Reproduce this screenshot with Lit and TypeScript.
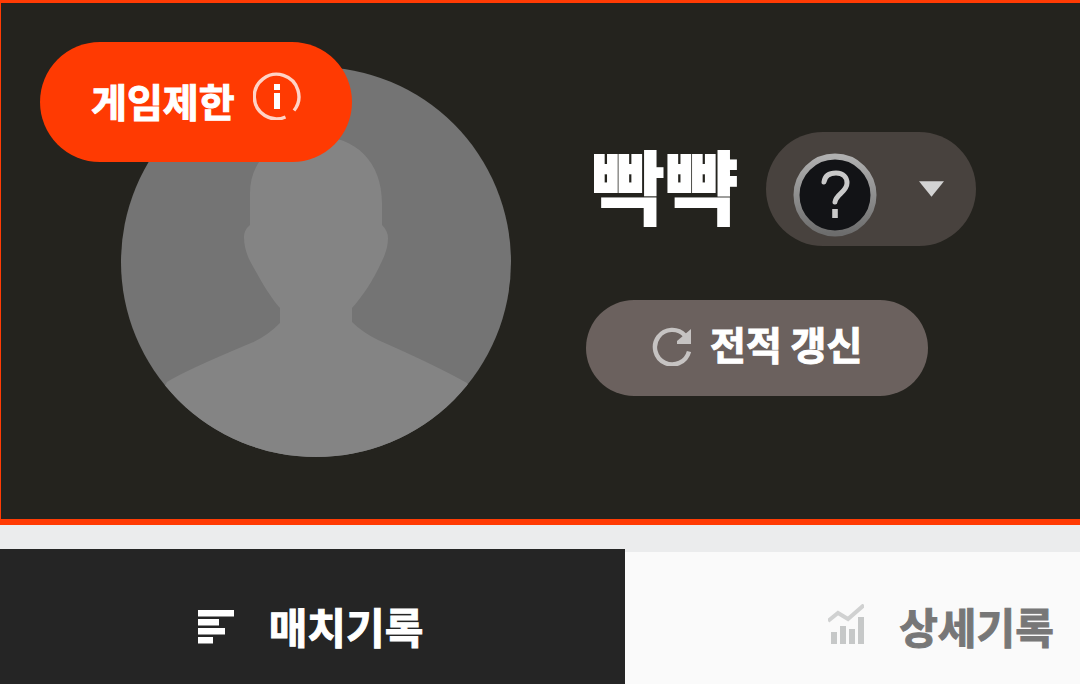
import { LitElement, html, css, svg } from "lit";
import { customElement, state } from "lit/decorators.js";

const infoIcon = svg`<svg class="info" viewBox="0 0 48 48" fill="none" aria-hidden="true">
  <path d="M32.5 45 A22.3 22.3 0 1 1 41 38.5" stroke="#ffd3c6" stroke-width="3.4"/>
  <path d="M21 12h6v6h-6zM21 21h6v16h-6z" fill="#fff"/>
</svg>`;

const personIcon = svg`<svg class="person" viewBox="0 0 390 390" aria-hidden="true">
  <path fill="#848484" d="M129 126 C129 92 156 69 194 69 C236 69 261 96 261 136 V158 Q267 164 267 171 Q267 182 261 194 C252 214 241 230 231 241 V255 Q241 265 257 273 Q314 298 346 316 L390 400 H0 L46 315 Q63 304 130 276 Q145 270 159 256 V241 C149 230 139 212 129 194 Q123 182 123 170 Q123 163 129 158Z"/>
</svg>`;

const questionIcon = svg`<svg class="question" viewBox="0 0 84 84" fill="none" aria-hidden="true">
  <defs><linearGradient id="ring" x1="0" y1="0" x2="0" y2="1"><stop stop-color="#b0b0b0"/><stop offset="1" stop-color="#6d6d6d"/></linearGradient></defs>
  <circle cx="42" cy="42" r="38.5" fill="#121316" stroke="url(#ring)" stroke-width="6"/>
  <path d="M31 29 C32 22 37 20 43 20 C51 20 54 25 54 30 C54 39 43 41 42 49" stroke="#c9c9c9" stroke-width="5" stroke-linecap="round"/>
  <path d="M39.200 56h5.600v9h-5.600z" fill="#c9c9c9"/>
</svg>`;

const caretIcon = svg`<svg class="caret" viewBox="0 0 26 16" aria-hidden="true"><path d="M0 0h26L13 16z" fill="#d3d3d3"/></svg>`;

const refreshIcon = svg`<svg class="refresh" viewBox="0 0 39 39" fill="none" aria-hidden="true">
  <path d="M37 24.5 A17.3 17.3 0 1 1 33 8.5" stroke="#c6c3c2" stroke-width="4.4"/>
  <path d="M39 2V17H25V14z" fill="#c6c3c2"/>
</svg>`;

const barsIcon = svg`<svg class="tab-icon" viewBox="0 0 36 40" aria-hidden="true">
  <path fill="#fff" d="M0 6h36v6.500H0zM0 15h21v6.500H0zM0 24h27v6.500H0zM0 33h15v6.500H0z"/>
</svg>`;

const chartIcon = svg`<svg class="tab-icon" viewBox="0 0 36 40" fill="none" aria-hidden="true">
  <path d="M0 17L10 9L20 15L36 1" stroke="#d0d1d1" stroke-width="4"/>
  <path fill="#c6c8c8" d="M3 28h6v12H3zM12 22h6v18h-6zM21 25h6v15h-6zM30 13h6v27h-6z"/>
</svg>`;

@customElement("app-root")
export class AppRoot extends LitElement {
  @state() private tab = "match";

  static styles = css`
    :host {
      display: flex;
      flex-direction: column;
      height: 100vh;
      overflow: hidden;
      background: #ebeced;
      color: #fff;
      font-family: "Noto Sans CJK KR", sans-serif;
    }
    button {
      border: 0;
      margin: 0;
      padding: 0;
      font: inherit;
      color: inherit;
      cursor: pointer;
    }
    svg { display: block; flex: none; }
    .profile {
      position: relative;
      flex: none;
      display: flex;
      align-items: flex-start;
      gap: 75px;
      padding: 64px 0 62px 120px;
      border: solid #ff3b04;
      border-width: 3px 0 6px 1px;
      background: #24231e;
    }
    .avatar {
      flex: none;
      width: 390px;
      height: 390px;
      border-radius: 50%;
      overflow: hidden;
      background: #747474;
    }
    .person { width: 100%; height: 100%; }
    .badge {
      position: absolute;
      top: 39px;
      left: 39px;
      display: flex;
      align-items: center;
      gap: 18px;
      height: 120px;
      padding: 0 51px;
      border-radius: 60px;
      background: #ff3a02;
      font-size: 39px;
      line-height: 56px;
      font-weight: 700;
    }
    .label { margin-bottom: 4px; -webkit-text-stroke: 1px currentColor; }
    .info { width: 48px; height: 48px; margin-bottom: 12px; }
    .details {
      display: flex;
      flex-direction: column;
      align-items: flex-start;
      gap: 54px;
      padding-top: 65px;
    }
    .identity { display: flex; align-items: flex-start; gap: 28px; padding-left: 5px; }
    .name {
      margin: 0;
      font-size: 80px;
      line-height: 102px;
      font-weight: 700;
      white-space: nowrap;
      -webkit-text-stroke: 2px currentColor;
    }
    .rank {
      display: flex;
      align-items: center;
      gap: 42px;
      height: 114px;
      padding: 0 32px 0 27px;
      border-radius: 57px;
      background: #48423e;
    }
    .question { width: 84px; height: 84px; margin-top: 12px; }
    .caret { width: 25px; height: 16px; }
    .update {
      display: flex;
      align-items: center;
      gap: 19px;
      height: 96px;
      padding: 0 66px;
      border-radius: 48px;
      background: #6b615e;
      font-size: 39px;
      line-height: 56px;
      font-weight: 700;
      white-space: nowrap;
    }
    .update .label { margin-bottom: 10px; }
    .refresh { width: 39px; height: 39px; margin-bottom: 4px; }
    .tabs {
      flex: 1;
      display: grid;
      grid-template-columns: 625px 636px;
      padding-top: 24px;
    }
    .tab {
      display: flex;
      align-items: flex-start;
      justify-content: center;
      gap: 35px;
      margin-top: 3px;
      padding: 47px 4px 0 0;
      background: #fafafa;
      color: #777;
      font-size: 42px;
      line-height: 54px;
      font-weight: 700;
    }
    .tab[aria-selected="true"] {
      margin-top: 0;
      padding-top: 50px;
      background: #252525;
      color: #fff;
    }
    .tab-icon { width: 36px; height: 40px; margin-top: 5px; }
  `;

  render() {
    return html`
      <section class="profile">
        <div class="avatar">${personIcon}</div>
        <button class="badge" type="button"><span class="label">게임제한</span>${infoIcon}</button>
        <div class="details">
          <div class="identity">
            <h1 class="name">빡뺙</h1>
            <button class="rank" type="button" aria-haspopup="listbox" aria-label="등급">
              ${questionIcon}${caretIcon}
            </button>
          </div>
          <button class="update" type="button">${refreshIcon}<span class="label">전적 갱신</span></button>
        </div>
      </section>
      <div class="tabs" role="tablist">
        <button class="tab" type="button" role="tab" aria-selected=${this.tab === "match"}
          @click=${() => (this.tab = "match")}>${barsIcon}<span class="label">매치기록</span></button>
        <button class="tab" type="button" role="tab" aria-selected=${this.tab === "detail"}
          @click=${() => (this.tab = "detail")}>${chartIcon}<span class="label">상세기록</span></button>
      </div>
    `;
  }
}
